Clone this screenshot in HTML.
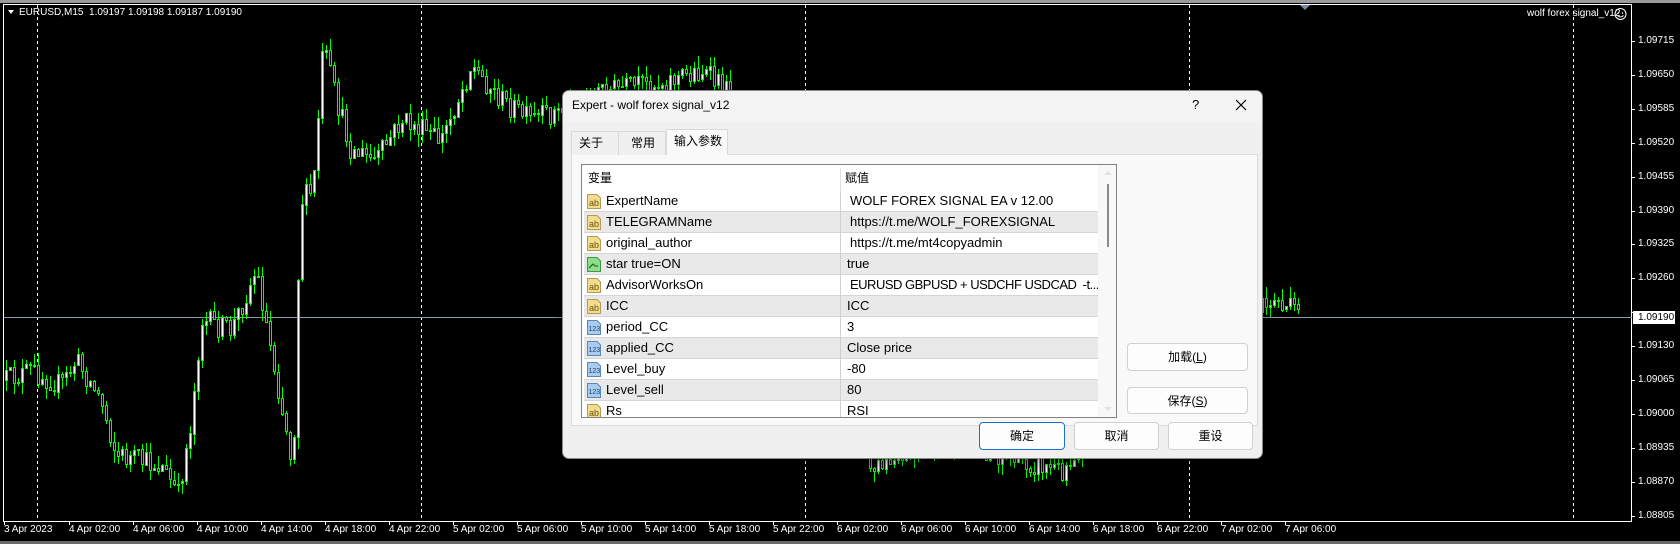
<!DOCTYPE html>
<html><head><meta charset="utf-8"><style>
*{margin:0;padding:0;box-sizing:border-box}
body{width:1680px;height:544px;overflow:hidden;background:#000;font-family:"Liberation Sans","Noto Sans CJK SC",sans-serif;position:relative}
.abs{position:absolute}
#dlg{left:562px;top:90px;width:701px;height:369px;background:#f0f0f0;border:1px solid #8a8a8a;border-radius:7px;overflow:hidden;box-shadow:0 4px 14px rgba(0,0,0,.4)}
.tb{height:31px;background:#f3f3f3}
.tab{position:absolute;top:40px;height:24px;border:1px solid #d9d9d9;border-bottom:none;background:#f0f0f0;font-size:12px;line-height:22px;padding-left:7px;color:#000}
.panel{position:absolute;left:8px;top:63px;width:687px;height:272px;background:#f9f9f9;border:1px solid #dcdcdc}
.tbl{position:absolute;left:18px;top:73px;width:536px;height:254px;background:#fff;border:1px solid #828282;overflow:hidden}
.row{position:absolute;left:2px;width:515px;height:21px;font-size:13px;line-height:20px;border-bottom:1px solid #d5d5d5;color:#000}
.row.g{background:#e9e9e9}
.row .n{position:absolute;left:22px}
.row .v{position:absolute;left:263px;white-space:nowrap}
.row .d{position:absolute;left:256px;top:0;width:1px;height:21px;background:#d0d0d0}
.ic{position:absolute;left:2px;top:2px;width:16px;height:17px}
.btn{position:absolute;height:28px;background:#fdfdfd;border:1px solid #d0d0d0;border-radius:4px;font-size:12px;text-align:center;line-height:26px;color:#000}
.pl{position:absolute;left:1638px;font-size:10px;color:#fff;line-height:12px}
.tl{position:absolute;top:524px;font-size:10px;color:#fff;line-height:12px}
</style></head><body>
<div class="abs" style="left:0;top:0;width:1680px;height:3px;background:#9a9a9a"></div>
<div class="abs" style="left:0;top:541px;width:1680px;height:3px;background:#6a6a6a"></div>
<svg class="abs" style="left:0;top:0" width="1680" height="544" id="ch">
<rect x="3.5" y="4.5" width="1628" height="517" fill="none" stroke="#fff" stroke-width="1"/>
<g stroke="#fff" stroke-dasharray="3,3" stroke-width="1">
<line x1="37.5" y1="5" x2="37.5" y2="521"/><line x1="421.5" y1="5" x2="421.5" y2="521"/><line x1="805.5" y1="5" x2="805.5" y2="521"/><line x1="1189.5" y1="5" x2="1189.5" y2="521"/><line x1="1573.5" y1="5" x2="1573.5" y2="521"/>
</g>
<line x1="4" y1="317.5" x2="1632" y2="317.5" stroke="#8a9aaa"/>
<g id="cd" stroke="#0f0" stroke-width="1"></g>
<g id="tk" stroke="#fff"></g>
<polygon points="8,10 14,10 11,14" fill="#fff"/>
<polygon points="1300,5 1310,5 1305,10" fill="#7a8aa0"/>
<circle cx="1620.5" cy="14" r="5.5" fill="none" stroke="#fff"/><circle cx="1618.5" cy="13" r=".8" fill="#fff"/><circle cx="1622.5" cy="13" r=".8" fill="#fff"/><path d="M1617.5 15.5 Q1620.5 18.5 1623.5 15.5" fill="none" stroke="#fff"/>
</svg>
<div class="abs" style="left:19px;top:7px;font-size:10px;color:#fff">EURUSD,M15&nbsp; 1.09197 1.09198 1.09187 1.09190</div>
<div class="abs" style="left:1527px;top:8px;font-size:10px;color:#fff">wolf forex signal_v12</div>
<div id="pls"></div>
<div id="tls"></div>
<div class="abs" style="left:1633px;top:311px;width:42px;height:13px;background:#fff"></div>
<div class="abs" style="left:1638px;top:311px;font-size:10px;color:#000;line-height:13px">1.09190</div>

<div id="dlg" class="abs">
<div class="tb"></div>
<div class="abs" style="left:9px;top:7px;font-size:12px;color:#000">Expert - wolf forex signal_v12</div>
<div class="abs" style="left:629px;top:6px;font-size:13px">?</div>
<svg class="abs" style="left:672px;top:8px" width="12" height="12"><path d="M1 1L11 11M11 1L1 11" stroke="#000" stroke-width="1.2"/></svg>
<div class="panel"></div>
<div class="tab" style="left:8px;width:48px">关于</div>
<div class="tab" style="left:55px;width:48px;padding-left:12px">常用</div>
<div class="tab" style="left:103px;width:62px;top:38px;height:26px;background:#f9f9f9;padding-left:7px">输入参数</div>
<div class="tbl" id="tbl">
<div class="abs" style="left:0;top:0;width:515px;height:26px;background:#fff;font-size:12px;line-height:26px"><span class="abs" style="left:6px">变量</span><span class="abs" style="left:263px">赋值</span><span class="abs" style="left:258px;top:3px;width:1px;height:23px;background:#e0e0e0"></span></div>
<div class="abs" style="left:516px;top:0;width:18px;height:252px;background:#f8f8f8"></div>
<div class="abs" style="left:525px;top:19px;width:2px;height:63px;background:#8a8a8a"></div>
<svg class="abs" style="left:520px;top:4px" width="12" height="8"><path d="M2 6L6 2L10 6Z" fill="#e2e2e2"/></svg>
<svg class="abs" style="left:520px;top:240px" width="12" height="8"><path d="M2 2L6 6L10 2Z" fill="#e2e2e2"/></svg>
</div>
<div class="btn" style="left:564px;top:252px;width:121px">加载(<u>L</u>)</div>
<div class="btn" style="left:564px;top:296px;width:121px;height:27px">保存(<u>S</u>)</div>
<div class="btn" style="left:416px;top:331px;width:86px;border:1.5px solid #1a6fd0">确定</div>
<div class="btn" style="left:511px;top:331px;width:85px">取消</div>
<div class="btn" style="left:605px;top:331px;width:85px">重设</div>
</div>
<script>
(function(){
var rows=[["a","ExpertName"," WOLF FOREX SIGNAL EA v 12.00"],["a","TELEGRAMName"," https://t.me/WOLF_FOREXSIGNAL"],["a","original_author"," https://t.me/mt4copyadmin"],["s","star true=ON","true"],["a","AdvisorWorksOn"," <span style=\"letter-spacing:-0.5px\">EURUSD GBPUSD + USDCHF USDCAD &nbsp;-t...</span>"],["a","ICC","ICC"],["n","period_CC","3"],["n","applied_CC","Close price"],["n","Level_buy","-80"],["n","Level_sell","80"],["a","Rs","RSI"]];
var h="";
rows.forEach(function(r,i){
var ic;
if(r[0]=="a")ic='<svg class="ic"><path d="M1.5 1.5H11L14.5 5V15.5H1.5Z" fill="#f2dc8e" stroke="#b59a52"/><text x="3" y="13" font-size="9" font-family="Liberation Sans" fill="#6a5010">ab</text></svg>';
else if(r[0]=="n")ic='<svg class="ic"><path d="M1.5 1.5H11L14.5 5V15.5H1.5Z" fill="#a9cdef" stroke="#5a86b8"/><text x="2.5" y="12" font-size="7" font-family="Liberation Sans" fill="#1d3f70">123</text></svg>';
else ic='<svg class="ic"><path d="M1.5 1.5H11L14.5 5V15.5H1.5Z" fill="#8fdc8f" stroke="#3d9a3d"/><path d="M3 12L7 8L9 10L12 10" stroke="#0a5a0a" fill="none"/></svg>';
var v=r[2].charAt(0)==" "?'<span class="v" style="left:266px">'+r[2].slice(1)+'</span>':'<span class="v">'+r[2]+'</span>';
h+='<div class="row'+(i%2?' g':'')+'" style="top:'+(26+i*21)+'px">'+ic+'<span class="n">'+r[1]+'</span><span class="d"></span>'+v+'</div>';
});
document.getElementById("tbl").insertAdjacentHTML("afterbegin",h);
var NS="http://www.w3.org/2000/svg";
function el(p,t,a){var e=document.createElementNS(NS,t);for(var k in a)e.setAttribute(k,a[k]);p.appendChild(e);return e;}
var pl=["1.09715","1.09650","1.09585","1.09520","1.09455","1.09390","1.09325","1.09260","","1.09130","1.09065","1.09000","1.08935","1.08870","1.08805"],ph="";
var tkg=document.getElementById("tk");
pl.forEach(function(p,i){var y=Math.round(41+33.9*i)+.5;if(p)ph+='<div class="pl" style="top:'+(y-6.5)+'px">'+p+'</div>';el(tkg,"line",{x1:1632,y1:y,x2:1635,y2:y});});
document.getElementById("pls").innerHTML=ph;
var tl=["3 Apr 2023"],d=["4","5","6"],t=["02:00","06:00","10:00","14:00","18:00","22:00"];
d.forEach(function(a){t.forEach(function(b){tl.push(a+" Apr "+b)})});tl.push("7 Apr 02:00","7 Apr 06:00");
var th="";tl.forEach(function(s,i){var x=i==0?4:5+64*i;th+='<div class="tl" style="left:'+x+'px">'+s+'</div>';el(tkg,"line",{x1:x+.5,y1:521,x2:x+.5,y2:525});});
document.getElementById("tls").innerHTML=th;
var kp=[[5,380],[30,370],[60,385],[75,360],[100,400],[115,455],[160,465],[177,495],[190,420],[200,320],[230,330],[255,270],[270,350],[285,430],[292,470],[296,300],[300,200],[312,190],[322,45],[335,100],[350,150],[375,160],[400,120],[440,140],[470,65],[500,100],[530,120],[560,110],[600,90],[650,85],[700,70],[760,120],[800,250],[840,380],[870,470],[900,460],[950,440],[1000,455],[1060,470],[1100,420],[1150,380],[1200,340],[1250,310],[1275,300],[1298,315]];
function tgt(x){for(var i=1;i<kp.length;i++){if(x<=kp[i][0]){var a=kp[i-1],b=kp[i],f=(x-a[0])/(b[0]-a[0]);return a[1]+(b[1]-a[1])*f;}}return 315;}
var sd=12345;function rnd(){sd=(sd*16807)%2147483647;return sd/2147483647;}
var g=document.getElementById("cd"),prev=380;
for(var x=5;x<=1298;x+=4){var cl=tgt(x)+(rnd()-.5)*24;var o=prev;
var hi=Math.round(Math.min(o,cl)-rnd()*12),lo=Math.round(Math.max(o,cl)+rnd()*12);
el(g,"line",{x1:x+1.5,y1:hi,x2:x+1.5,y2:lo});
var by=Math.round(Math.min(o,cl)),hh=Math.max(1,Math.round(Math.abs(o-cl)));
el(g,"rect",{x:x+.5,y:by+.5,width:2,height:hh,fill:(cl<o?"#fff":"#000")});
prev=cl;}
})();
</script>
</body></html>
